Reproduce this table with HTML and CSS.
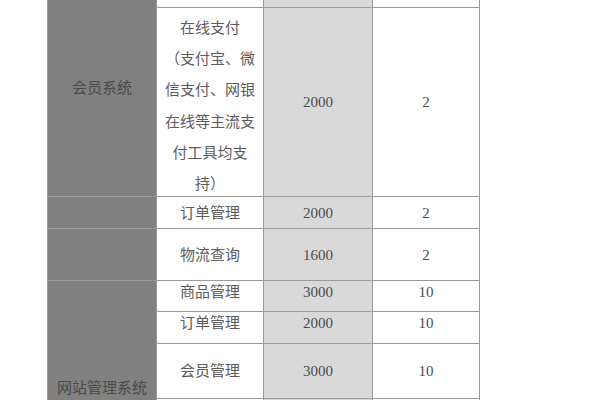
FILE: index.html
```html
<!DOCTYPE html>
<html>
<head>
<meta charset="utf-8">
<link rel="stylesheet" href="styles.css">
</head>
<body>
<div class="page">
  <table class="grid">
    <colgroup>
      <col class="c1"><col class="c2"><col class="c3"><col class="c4">
    </colgroup>
    <tr class="r0">
      <td class="sys" rowspan="2">会员系统</td>
      <td class="item"></td><td class="num"></td><td class="cnt"></td>
    </tr>
    <tr class="r1">
      <td class="item multi"><div class="lines">在线支付<br>（支付宝、微<br>信支付、网银<br>在线等主流支<br>付工具均支<br>持）</div></td>
      <td class="num">2000</td>
      <td class="cnt">2</td>
    </tr>
    <tr class="r2">
      <td class="sys"></td>
      <td class="item">订单管理</td><td class="num">2000</td><td class="cnt">2</td>
    </tr>
    <tr class="r3">
      <td class="sys"></td>
      <td class="item">物流查询</td><td class="num">1600</td><td class="cnt">2</td>
    </tr>
    <tr class="r4 raised">
      <td class="sys site" rowspan="4">网站管理系统</td>
      <td class="item">商品管理</td><td class="num">3000</td><td class="cnt">10</td>
    </tr>
    <tr class="r5 raised">
      <td class="item">订单管理</td><td class="num">2000</td><td class="cnt">10</td>
    </tr>
    <tr class="r6">
      <td class="item">会员管理</td><td class="num">3000</td><td class="cnt">10</td>
    </tr>
    <tr class="r7">
      <td class="item"></td><td class="num"></td><td class="cnt"></td>
    </tr>
  </table>
</div>
</body>
</html>
```
FILE: styles.css
```css
html, body {
  margin: 0;
  padding: 0;
  background: #ffffff;
  overflow: hidden;
}
.page {
  width: 600px;
  height: 400px;
  overflow: hidden;
  padding-left: 47px;
  box-sizing: border-box;
}
.grid {
  margin-top: -22px;
  border-collapse: collapse;
  table-layout: fixed;
  width: 432px;
  font-family: "Liberation Serif", "Noto Sans CJK SC", serif;
  font-size: 15px;
  color: #4a4a4a;
}
.c1 { width: 109px; }
.c2 { width: 107px; }
.c3 { width: 109px; }
.c4 { width: 107px; }
.grid td {
  border: 1px solid #9a9a9a;
  text-align: center;
  vertical-align: middle;
  padding: 0;
  line-height: 20px;
}
.grid td.item {
  color: #5c5c5c;
}
.sys {
  background: #808080;
  color: #4a4a4a;
  border-color: #6e6e6e;
}
.num {
  background: #d9d9d9;
}
.r0 { height: 29px; }
.r1 { height: 189px; }
.r2 { height: 32px; }
.r3 { height: 52px; }
.r4 { height: 31px; }
.r5 { height: 32px; }
.r6 { height: 55px; }
.r7 { height: 96px; }
.raised td.item, .raised td.num, .raised td.cnt {
  padding-bottom: 9px;
}
.grid td.multi {
  vertical-align: top;
}
.lines {
  margin-top: 5px;
  height: 180px;
  line-height: 31.2px;
  white-space: nowrap;
}
.site {
  padding-top: 0;
}
```
